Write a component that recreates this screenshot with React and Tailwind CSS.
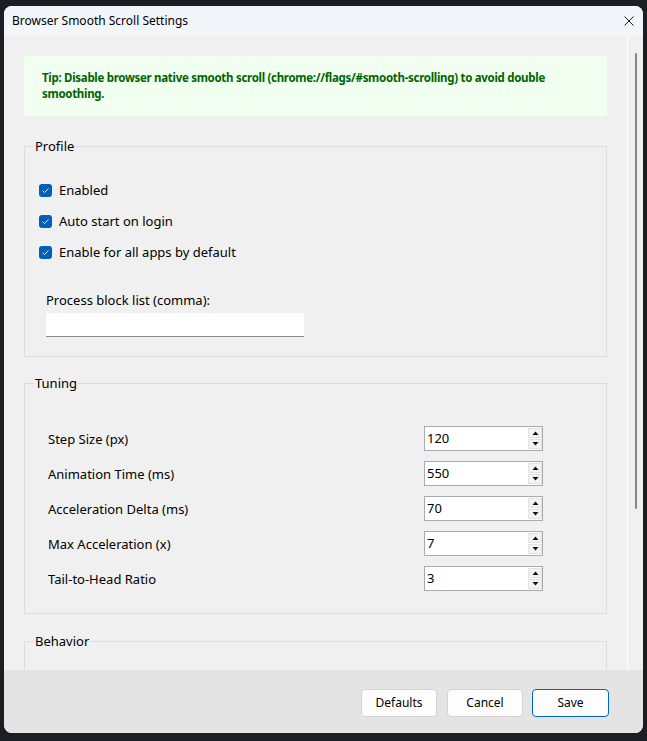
import React from "react";

const F = "[font-family:'Segoe_UI','Noto_Sans',sans-serif]";

function Check() {
  return (
    <span className="w-[13px] h-[13px] rounded-[3px] bg-[#005fb8] flex items-center justify-center shrink-0">
      <svg width="9" height="9" viewBox="0 0 9 9">
        <path d="M1.6 4.7 L3.5 6.6 L7.5 2.5" stroke="#dce9f7" strokeWidth="1" fill="none" />
      </svg>
    </span>
  );
}

function CheckRow({ label }) {
  return (
    <div className="h-[20px] flex items-center gap-[7px]">
      <Check />
      <span className="text-[13px] leading-[16px] text-black">{label}</span>
    </div>
  );
}

function SpinBtn({ up }) {
  return (
    <div className="w-[14px] h-[10px] bg-[#f3f3f3] border border-[#e2e2e2] flex items-center justify-center">
      <svg width="7" height="4" viewBox="0 0 7 4">
        {up ? <path d="M0.5 4 L3.5 0.5 L6.5 4 Z" fill="#111" /> : <path d="M0.5 0 L3.5 3.5 L6.5 0 Z" fill="#111" />}
      </svg>
    </div>
  );
}

function Num({ value }) {
  return (
    <div className="w-[119px] h-[25px] border border-[#a9a9b1] bg-white flex items-center">
      <span className="flex-1 pl-[2px] text-[13px] leading-none text-black">{value}</span>
      <div className="flex flex-col gap-[1px] self-start mt-[1px]">
        <SpinBtn up />
        <SpinBtn />
      </div>
    </div>
  );
}

function TuneRow({ label, value }) {
  return (
    <div className="h-[25px] flex items-center justify-between pl-[23px] pr-[63px]">
      <span className="text-[13px] leading-[16px] text-black">{label}</span>
      <Num value={value} />
    </div>
  );
}

function Legend({ children }) {
  return (
    <legend className="ml-[9px] px-[1px] text-[13px] leading-[16px] text-black">{children}</legend>
  );
}

export default function App() {
  return (
    <div className={`w-[647px] h-[741px] bg-[#1b1e23] pt-[6px] pl-[4px] pr-[4px] pb-[8px] ${F}`}>
      <div className="w-full h-full rounded-[8px] overflow-hidden flex flex-col bg-[#f0f0f0]">
        {/* title bar */}
        <div className="h-[30px] shrink-0 bg-[#f2f5f9] flex items-center justify-between pl-[8px] pr-[9px]">
          <span className="text-[12px] leading-[16px] text-black">Browser Smooth Scroll Settings</span>
          <svg width="10" height="10" viewBox="0 0 10 10">
            <path d="M0.5 0.5 L9.5 9.5 M9.5 0.5 L0.5 9.5" stroke="#1a1a1a" strokeWidth="1" />
          </svg>
        </div>
        {/* content */}
        <div className="flex-1 min-h-0 flex">
          <div className="flex-1 min-w-0 overflow-hidden px-[20px] pt-[20px]">
            <div className="h-[60px] bg-[#f0fff0] pl-[18px] flex items-center">
              <p className="text-[11.5px] leading-[16px] font-bold tracking-[-0.3px] text-[#006400] whitespace-nowrap">
                Tip: Disable browser native smooth scroll (chrome://flags/#smooth-scrolling) to avoid double
                <br />
                smoothing.
              </p>
            </div>

            <fieldset className="mt-[22px] border border-[#dcdcdc] p-0">
              <Legend>Profile</Legend>
              <div className="pl-[14px] pt-[26px] pb-[19px]">
                <div className="flex flex-col gap-[11px]">
                  <CheckRow label="Enabled" />
                  <CheckRow label="Auto start on login" />
                  <CheckRow label="Enable for all apps by default" />
                </div>
                <div className="pl-[7px] mt-[30px] text-[13px] leading-[16px] text-black">Process block list (comma):</div>
                <div className="ml-[7px] mt-[5px] w-[258px] h-[24px] bg-white border-b border-[#8a8a8a]"></div>
              </div>
            </fieldset>

            <fieldset className="mt-[18px] border border-[#dcdcdc] p-0">
              <Legend>Tuning</Legend>
              <div className="pt-[35px] pb-[22px] flex flex-col gap-[10px]">
                <TuneRow label="Step Size (px)" value="120" />
                <TuneRow label="Animation Time (ms)" value="550" />
                <TuneRow label="Acceleration Delta (ms)" value="70" />
                <TuneRow label="Max Acceleration (x)" value="7" />
                <TuneRow label="Tail-to-Head Ratio" value="3" />
              </div>
            </fieldset>

            <fieldset className="mt-[19px] border border-[#dcdcdc] p-0">
              <Legend>Behavior</Legend>
              <div className="h-[120px]"></div>
            </fieldset>
          </div>
          {/* scrollbar */}
          <div className="w-[16px] shrink-0 border-l border-white flex justify-center pl-[1px]">
            <div className="mt-[17px] w-[2px] h-[456px] rounded-full bg-[#868686]"></div>
          </div>
        </div>
        {/* footer */}
        <div className="h-[63px] shrink-0 bg-[#e4e4e4] flex justify-end items-start pt-[19px] pr-[34px]">
          <button className="w-[76px] h-[28px] rounded-[4px] bg-[#fdfdfd] border border-[#d3d3d3] text-[12px] text-black">Defaults</button>
          <button className="ml-[10px] w-[76px] h-[28px] rounded-[4px] bg-[#fdfdfd] border border-[#d3d3d3] text-[12px] text-black">Cancel</button>
          <button className="ml-[9px] w-[77px] h-[28px] rounded-[4px] bg-[#fdfdfd] border border-[#0067c0] text-[12px] text-black">Save</button>
        </div>
      </div>
    </div>
  );
}
